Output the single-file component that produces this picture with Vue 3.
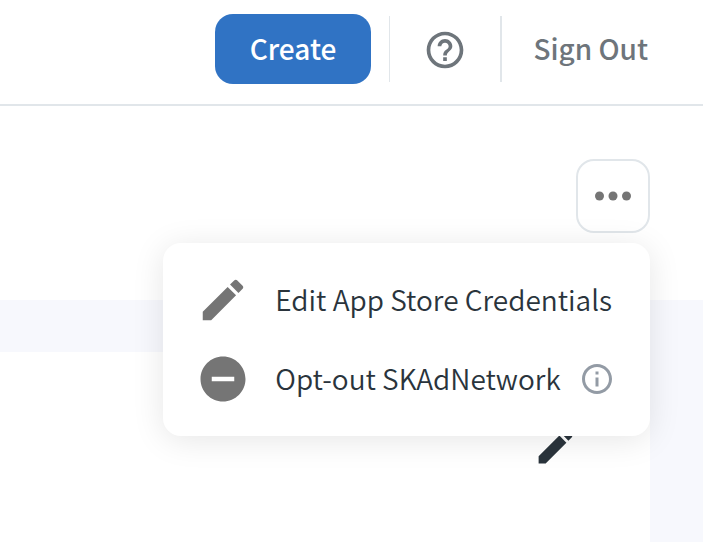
<script setup>
import { ref } from 'vue'

const menuOpen = ref(true)
const pencil =
  'M3 17.25V21h3.75L17.81 9.94l-3.75-3.75L3 17.25zM20.71 7.04c.39-.39.39-1.02 0-1.41l-2.34-2.34c-.39-.39-1.02-.39-1.41 0l-1.83 1.83 3.75 3.75 1.83-1.83z'
</script>

<template>
  <div class="page">
    <header class="topbar">
      <button type="button" class="create">Create</button>
      <span class="divider thin"></span>
      <button type="button" class="icon-button help" aria-label="Help">
        <svg viewBox="0 0 24 24" width="44" height="44">
          <path d="M11 18h2v-2h-2v2zm1-16C6.480 2 2 6.480 2 12s4.480 10 10 10 10-4.480 10-10S17.520 2 12 2zm0 18c-4.410 0-8-3.590-8-8s3.590-8 8-8 8 3.590 8 8-3.590 8-8 8zm0-14c-2.210 0-4 1.790-4 4h2c0-1.100.9-2 2-2s2 .9 2 2c0 2-3 1.750-3 5h2c0-2.250 3-2.500 3-5 0-2.210-1.790-4-4-4z" />
        </svg>
      </button>
      <span class="divider"></span>
      <a href="#" class="sign-out">Sign Out</a>
    </header>

    <section class="toolbar">
      <div class="menu-anchor">
        <button
          type="button"
          class="more"
          aria-label="More actions"
          :aria-expanded="menuOpen"
          @click="menuOpen = !menuOpen"
        >
          <svg viewBox="0 0 24 24" width="54" height="54">
            <circle cx="6" cy="12" r="2" />
            <circle cx="12" cy="12" r="2" />
            <circle cx="18" cy="12" r="2" />
          </svg>
        </button>
        <div v-if="menuOpen" class="menu">
          <button type="button" class="item">
            <svg viewBox="0 0 24 24" width="54" height="54"><path :d="pencil" /></svg>
            <span>Edit App Store Credentials</span>
          </button>
          <button type="button" class="item">
            <svg viewBox="0 0 24 24" width="54" height="54">
              <path d="M12 2C6.480 2 2 6.480 2 12s4.480 10 10 10 10-4.480 10-10S17.520 2 12 2zm5 11H7v-2h10v2z" />
            </svg>
            <span>Opt-out SKAdNetwork</span>
            <svg class="info" viewBox="0 0 24 24" width="36" height="36">
              <path d="M11 7h2v2h-2zM11 11h2v6h-2zM12 2C6.480 2 2 6.480 2 12s4.480 10 10 10 10-4.480 10-10S17.520 2 12 2zm0 18c-4.410 0-8-3.590-8-8s3.590-8 8-8 8 3.590 8 8-3.590 8-8 8z" />
            </svg>
          </button>
        </div>
      </div>
    </section>

    <main class="content">
      <div class="card">
        <button type="button" class="icon-button edit" aria-label="Edit">
          <svg viewBox="0 0 24 24" width="45" height="45"><path :d="pencil" /></svg>
        </button>
      </div>
    </main>
  </div>
</template>

<style>
body {
  margin: 0;
  background: #fff;
}
</style>

<style scoped>
.page {
  display: flex;
  flex-direction: column;
  min-height: 100vh;
  box-sizing: border-box;
  padding-right: 3px;
  overflow: hidden;
  font-family: "Noto Sans CJK JP", "Noto Sans", sans-serif;
  font-size: 28px;
  font-weight: 350;
  line-height: 40px;
  color: #2a343c;
}
svg {
  display: block;
  flex: none;
  fill: currentColor;
}
button {
  font: inherit;
  color: inherit;
  border: 0;
  padding: 0;
  background: none;
  cursor: pointer;
}
.topbar {
  display: flex;
  align-items: center;
  justify-content: flex-end;
  height: 98px;
  padding: 0 55px 6px 0;
  border-bottom: 2px solid #e1e6ea;
}
.create {
  height: 70px;
  padding: 0 35px 2px;
  margin-right: 18px;
  border-radius: 18px;
  background: #3073c4;
  color: #fff;
  font-weight: 500;
}
.divider {
  width: 2px;
  height: 66px;
  background: #e1e6ea;
}
.divider.thin {
  width: 1px;
}
.help {
  margin: 0 33px;
  padding-top: 2px;
  color: #6e757b;
}
.sign-out {
  margin-left: 31px;
  padding-bottom: 2px;
  color: #6e757b;
  font-weight: 500;
  text-decoration: none;
}
.toolbar {
  display: flex;
  justify-content: flex-end;
  padding: 53px 53px 67px;
}
.menu-anchor {
  position: relative;
}
.more {
  display: flex;
  align-items: center;
  justify-content: center;
  box-sizing: border-box;
  width: 74px;
  height: 74px;
  border: 2px solid #e1e6ea;
  border-radius: 18px;
  background: #fff;
  color: #757575;
}
.menu {
  position: absolute;
  z-index: 2;
  top: 84px;
  right: 0;
  box-sizing: border-box;
  padding: 17px 34px 18px 33px;
  border-radius: 18px;
  background: #fff;
  box-shadow: 0 4px 32px rgba(0, 0, 0, 0.1);
}
.item {
  display: flex;
  align-items: center;
  width: 100%;
  height: 79px;
  white-space: nowrap;
}
.item svg {
  color: #757575;
}
.item span {
  margin: 0 4px 0 25px;
  padding-bottom: 2px;
}
.item .info {
  margin-left: 14px;
  color: #939ba5;
}
.content {
  display: flex;
  flex: 1;
  padding: 52px 53px 0 0;
  background: #f7f8fd;
}
.card {
  display: flex;
  flex: 1;
  align-items: flex-start;
  justify-content: flex-end;
  padding: 72px 72px 0 0;
  background: #fff;
}
.edit {
  color: #2a343c;
}
</style>
